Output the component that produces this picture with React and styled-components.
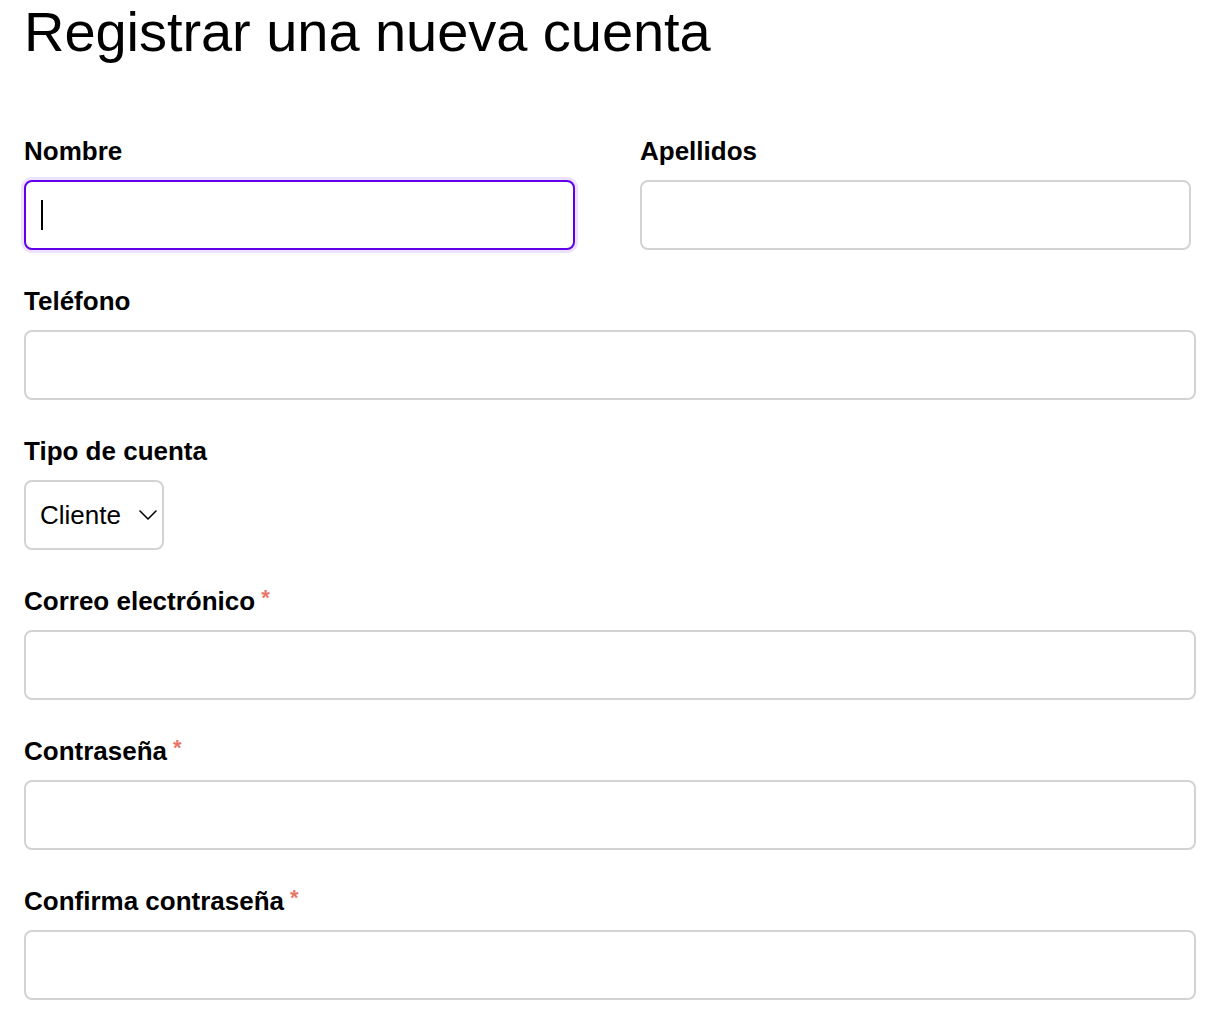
import styled, { createGlobalStyle, css } from "styled-components";

const GlobalStyle = createGlobalStyle`
  body {
    margin: 0;
    background: #fff;
    color: #000;
    font-family: "Liberation Sans", Arial, Helvetica, sans-serif;
  }
`;

const Page = styled.div`
  padding: 0 34px 0 24px;
  width: 1172px;
`;

const Title = styled.h1`
  margin: 0 0 72px;
  font-size: 56px;
  line-height: 64px;
  font-weight: 400;
  letter-spacing: -0.05px;
`;

const Form = styled.form`
  display: flex;
  flex-direction: column;
  gap: 36px;
`;

const Row = styled.div`
  display: grid;
  grid-template-columns: 551px 551px;
  column-gap: 65px;
`;

const Field = styled.div`
  display: flex;
  flex-direction: column;
  gap: 14px;
  align-items: flex-start;
`;

const Label = styled.label`
  font-size: 26px;
  line-height: 30px;
  font-weight: 700;
`;

const Required = styled.span`
  color: #e8776b;
  font-size: 22px;
  font-weight: 700;
  margin-left: 6px;
  vertical-align: top;
  position: relative;
  top: -3px;
`;

const focusRing = css`
  border-color: #6200ea;
  box-shadow: 0 0 0 3px #ece2ff;
  outline: none;
`;

const InputWrap = styled.div`
  position: relative;
  width: 100%;
`;

const Input = styled.input`
  box-sizing: border-box;
  width: 100%;
  height: 70px;
  padding: 0 16px;
  border: 2px solid #d3d3d3;
  border-radius: 8px;
  font-family: inherit;
  font-size: 26px;
  color: #000;
  background: #fff;
  caret-color: #000;

  &:focus {
    ${focusRing}
  }
  ${(p) => p.$focused && focusRing}
`;

/* caret drawn over the focused field so it shows in a still picture */
const Caret = styled.span`
  position: absolute;
  left: 17px;
  top: 20px;
  width: 2px;
  height: 30px;
  background: #000;
  pointer-events: none;
`;

const SelectWrap = styled.div`
  position: relative;
  width: 140px;
`;

const Select = styled.select`
  box-sizing: border-box;
  width: 140px;
  height: 70px;
  padding: 0 36px 0 14px;
  border: 2px solid #d3d3d3;
  border-radius: 8px;
  background: #fff;
  font-family: inherit;
  font-size: 26px;
  color: #000;
  appearance: none;
  -webkit-appearance: none;
`;

const Chevron = styled.svg`
  position: absolute;
  left: 115px;
  top: 30px;
  pointer-events: none;
`;

function TextField({ label, required, type = "text", focused }) {
  return (
    <Field>
      <Label>
        {label}
        {required && <Required>*</Required>}
      </Label>
      <InputWrap>
        <Input type={type} $focused={focused} />
        {focused && <Caret />}
      </InputWrap>
    </Field>
  );
}

export default function App() {
  return (
    <>
      <GlobalStyle />
      <Page>
        <Title>Registrar una nueva cuenta</Title>
        <Form>
          <Row>
            <TextField label="Nombre" focused />
            <TextField label="Apellidos" />
          </Row>
          <TextField label="Teléfono" type="tel" />
          <Field>
            <Label>Tipo de cuenta</Label>
            <SelectWrap>
              <Select defaultValue="cliente">
                <option value="cliente">Cliente</option>
                <option value="proveedor">Proveedor</option>
              </Select>
              <Chevron width="18" height="10" viewBox="0 0 18 10" fill="none">
                <path d="M1 1l8 8 8-8" stroke="#000" strokeWidth="1.6" strokeLinecap="round" strokeLinejoin="round" />
              </Chevron>
            </SelectWrap>
          </Field>
          <TextField label="Correo electrónico" type="email" required />
          <TextField label="Contraseña" type="password" required />
          <TextField label="Confirma contraseña" type="password" required />
        </Form>
      </Page>
    </>
  );
}
